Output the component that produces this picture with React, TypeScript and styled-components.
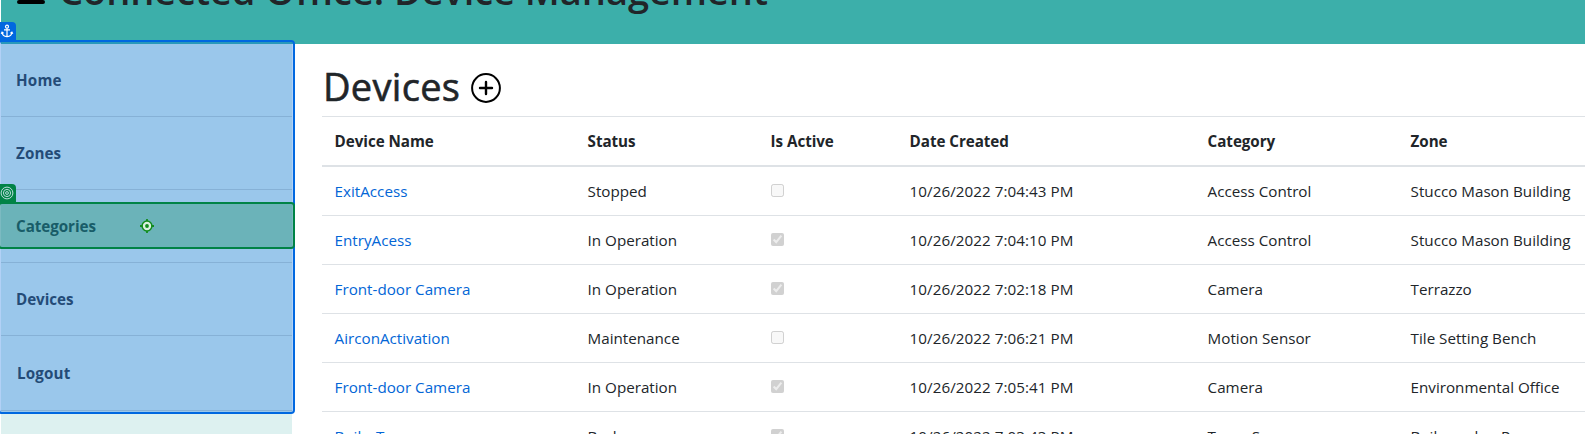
import React from 'react';
import styled, { createGlobalStyle } from 'styled-components';

const GlobalStyle = createGlobalStyle`
  * { box-sizing: border-box; }
  body {
    margin: 0;
    height: 434px;
    overflow: hidden;
    background: #fff;
    color: #212529;
    font-family: 'Open Sans', 'Noto Sans', sans-serif;
    font-size: 15.2px;
    line-height: 24px;
  }
`;

const Page = styled.div`
  height: 434px;
  display: flex;
  flex-direction: column;
  padding-left: 1px;
  overflow: hidden;
  position: relative;
`;

const Header = styled.header`
  height: 44px;
  flex: none;
  background: #3cafaa;
  display: flex;
  align-items: flex-start;
  padding-left: 16px;
`;

const MenuIcon = styled.svg`
  width: 28px;
  height: 28px;
  margin-top: -24px;
  flex: none;
`;

const AppTitle = styled.h1`
  margin: -34px 0 0 14px;
  font-size: 38px;
  font-weight: 600;
  line-height: 48px;
  letter-spacing: -0.05px;
  white-space: nowrap;
`;

const Body = styled.div`
  flex: 1;
  min-height: 0;
  display: flex;
`;

const Sidebar = styled.nav`
  width: 291px;
  flex: none;
  background: #ddf1f0;
`;

const NavItem = styled.a<{ $h?: number; $indent?: number }>`
  display: flex;
  align-items: center;
  height: ${p => p.$h ?? 73}px;
  padding-left: ${p => p.$indent ?? 15}px;
  border-bottom: 1px solid rgba(0, 0, 0, 0.125);
  color: #343f49;
  font-weight: 700;
`;

const Label = styled.span<{ $ls?: number }>`
  letter-spacing: ${p => p.$ls ?? 0}px;
  white-space: nowrap;
`;

const Main = styled.main`
  flex: 1;
  min-width: 0;
  padding: 18px 0 0 30px;
`;

const Heading = styled.div`
  display: flex;
  align-items: center;
  height: 54px;
  gap: 11px;
`;

const HeadingText = styled.h2`
  margin: -7px 0 0 1px;
  font-size: 38px;
  font-weight: 500;
  line-height: 48px;
  letter-spacing: 0.3px;
  -webkit-text-stroke: 0.6px #212529;
`;

const AddIcon = styled.svg`
  width: 30px;
  height: 30px;
  margin-top: -2px;
`;

const Row = styled.div<{ $head?: boolean }>`
  display: grid;
  grid-template-columns: 253px 183px 139px 298px 203px 1fr;
  align-items: center;
  height: ${p => (p.$head ? 51 : 49)}px;
  padding-left: 12.6px;
  border-top: ${p => (p.$head ? '1px solid #dee2e6' : '0')};
  border-bottom: ${p => (p.$head ? 2 : 1)}px solid #dee2e6;
  font-weight: ${p => (p.$head ? 700 : 400)};
`;

const DeviceLink = styled.a`
  color: #0366d6;
`;

const Check = styled.input`
  display: block;
  width: 13px;
  height: 13px;
  margin: -2px 0 0 0.4px;
`;

const Highlight = styled.div<{ $top: number; $width: number; $height: number; $rgb: string }>`
  position: absolute;
  left: -2px;
  top: ${p => p.$top}px;
  width: ${p => p.$width}px;
  height: ${p => p.$height}px;
  border: 2px solid rgb(${p => p.$rgb});
  border-radius: 4px;
  background: rgba(${p => p.$rgb}, 0.3);
  background-clip: padding-box;
`;

const Badge = styled.div<{ $top: number; $rgb: string }>`
  position: absolute;
  left: 0;
  top: ${p => p.$top}px;
  width: 16px;
  height: 19px;
  padding-top: 2px;
  border-radius: 0 4px 0 0;
  background: rgb(${p => p.$rgb});
  svg { display: block; width: 14px; height: 14px; }
`;

const Crosshair = styled.svg`
  position: absolute;
  left: 140px;
  top: 219px;
  width: 14px;
  height: 14px;
`;

const BLUE = '0, 104, 224';
const GREEN = '0, 131, 70';

const nav = [
  { label: 'Home', h: 73, ls: 0.2 },
  { label: 'Zones', h: 73, ls: 0.1 },
  { label: 'Categories', h: 73, ls: -0.05 },
  { label: 'Devices', h: 73, ls: -0.05 },
  { label: 'Logout', h: 75, indent: 16, ls: 0.15 },
];

const columns = ['Device Name', 'Status', 'Is Active', 'Date Created', 'Category', 'Zone'];

const devices = [
  { name: 'ExitAccess', status: 'Stopped', active: false, date: '10/26/2022 7:04:43 PM', category: 'Access Control', zone: 'Stucco Mason Building' },
  { name: 'EntryAcess', status: 'In Operation', active: true, date: '10/26/2022 7:04:10 PM', category: 'Access Control', zone: 'Stucco Mason Building' },
  { name: 'Front-door Camera', status: 'In Operation', active: true, date: '10/26/2022 7:02:18 PM', category: 'Camera', zone: 'Terrazzo' },
  { name: 'AirconActivation', status: 'Maintenance', active: false, date: '10/26/2022 7:06:21 PM', category: 'Motion Sensor', zone: 'Tile Setting Bench' },
  { name: 'Front-door Camera', status: 'In Operation', active: true, date: '10/26/2022 7:05:41 PM', category: 'Camera', zone: 'Environmental Office' },
  { name: 'BoilerTemp', status: 'Broken', active: true, date: '10/26/2022 7:03:43 PM', category: 'Temp Sensor', zone: 'Boilermaker Room' },
];

export default function App() {
  return (
    <>
      <GlobalStyle />
      <Page>
        <Header>
          <MenuIcon viewBox="0 0 28 28">
            <path d="M2 2h24M2 14h24M2 26h24" stroke="#000" strokeWidth="4" strokeLinecap="round" />
          </MenuIcon>
          <AppTitle>Connected Office: Device Management</AppTitle>
        </Header>
        <Body>
          <Sidebar>
            {nav.map(n => (
              <NavItem key={n.label} $h={n.h} $indent={n.indent}>
                <Label $ls={n.ls}>{n.label}</Label>
              </NavItem>
            ))}
          </Sidebar>
          <Main>
            <Heading>
              <HeadingText>Devices</HeadingText>
              <AddIcon viewBox="0 0 30 30" fill="none" stroke="#000">
                <circle cx="15" cy="15" r="13.9" strokeWidth="2" />
                <path d="M15 9v12M9 15h12" strokeWidth="2.4" strokeLinecap="round" />
              </AddIcon>
            </Heading>
            <Row $head>
              {columns.map(c => <Label key={c} $ls={-0.05}>{c}</Label>)}
            </Row>
            {devices.map((d, i) => (
              <Row key={i}>
                <DeviceLink><Label>{d.name}</Label></DeviceLink>
                <Label>{d.status}</Label>
                <Check type="checkbox" disabled checked={d.active} readOnly />
                <Label $ls={0.05}>{d.date}</Label>
                <Label>{d.category}</Label>
                <Label>{d.zone}</Label>
              </Row>
            ))}
          </Main>
        </Body>
        <Highlight $top={40} $width={297} $height={374} $rgb={BLUE} />
        <Badge $top={22} $rgb={BLUE}>
          <svg viewBox="0 0 14 14" fill="none" stroke="#fff" strokeWidth="1.2">
            <circle cx="7" cy="2.7" r="1.5" />
            <path d="M7 4.2v8.6M4 5.8h6M2 8.3c.2 2.8 2.2 4.2 5 4.4 2.8-.2 4.8-1.6 5-4.4M1.2 9.7l.9-1.5 1.5 1M12.8 9.7l-.9-1.5-1.5 1" />
          </svg>
        </Badge>
        <Highlight $top={202} $width={297} $height={47} $rgb={GREEN} />
        <Badge $top={184} $rgb={GREEN}>
          <svg viewBox="0 0 14 14" fill="none" stroke="#b7dcdb" strokeWidth="1">
            <circle cx="7" cy="7" r="5.9" />
            <circle cx="7" cy="7" r="3.6" />
            <circle cx="7" cy="7" r="1.4" />
          </svg>
        </Badge>
        <Crosshair viewBox="0 0 14 14">
          <path d="M7 0v14M0 7h14" stroke="#128c1e" strokeWidth="1.8" />
          <circle cx="7" cy="7" r="4.9" fill="#d9f0e0" stroke="#128c1e" strokeWidth="1.5" />
          <circle cx="7" cy="7" r="1.9" fill="#128c1e" />
        </Crosshair>
      </Page>
    </>
  );
}
